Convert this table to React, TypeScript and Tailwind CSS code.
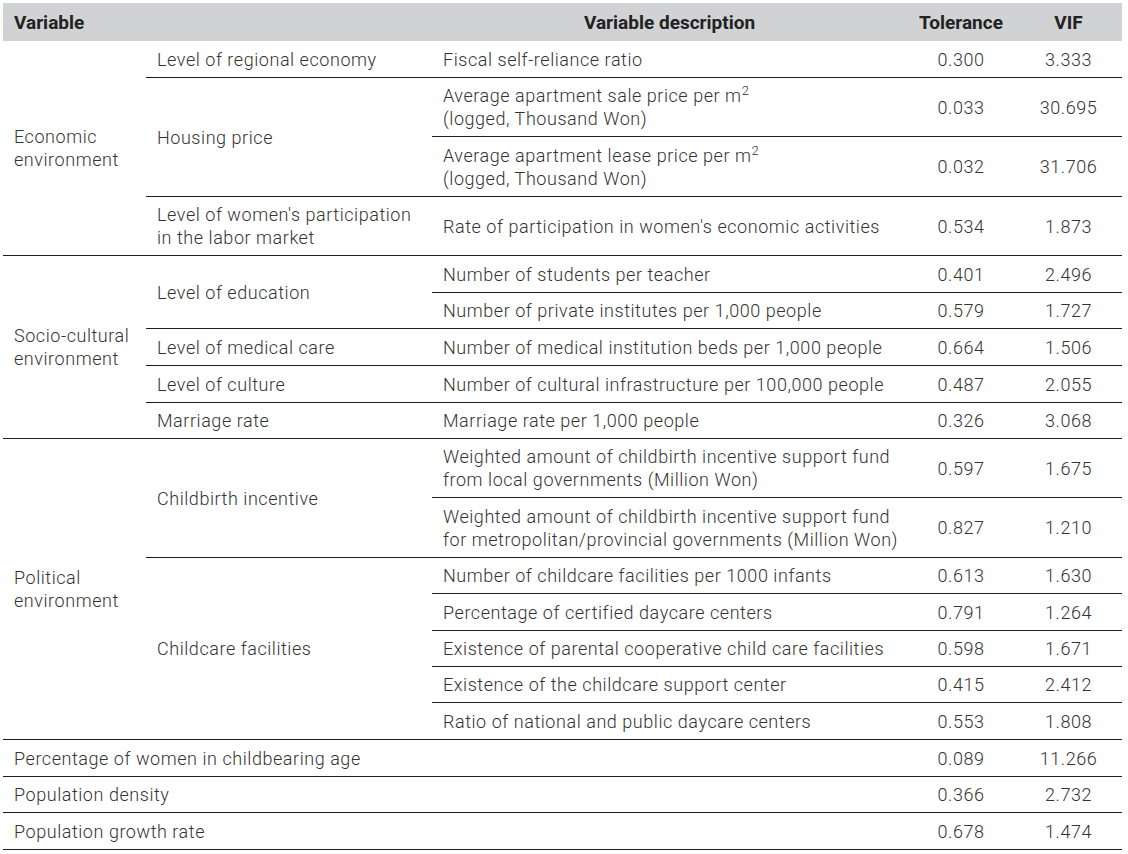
import React from "react";

type CellProps = {
	children?: React.ReactNode;
	className?: string;
	center?: boolean;
};

const Cell = ({ children, className = "", center }: CellProps) => (
	<div
		className={`flex items-center border-b border-[#1f1f1f] ${
			center ? "justify-center text-center" : "pl-[11px]"
		} ${className}`}
	>
		<div>{children}</div>
	</div>
);

const M2 = () => (
	<>
		m<sup className="relative -top-[7px] text-[13px] tracking-normal">2</sup>
	</>
);

const App = () => {
	return (
		<div className="min-h-screen bg-white pt-[3px] pl-[3px]">
			<div
				className="grid w-[1119px] grid-cols-[143px_286px_475px_108px_107px] grid-rows-[38px_37px_59px_60px_59px_37px_36px_37px_37px_36px_59px_60px_36px_37px_36px_36px_37px_37px_36px_37px] text-[18px] leading-[23px] font-light tracking-[0.55px] text-[#333333]"
				style={{ fontFamily: "Roboto, 'Noto Sans', sans-serif" }}
			>
				{/* header */}
				<div className="col-span-2 flex items-center bg-[#d1d2d4] pl-[11px] text-[19px] font-bold tracking-[0px] text-[#222]">
					Variable
				</div>
				<div className="flex items-center justify-center bg-[#d1d2d4] text-[19px] font-bold tracking-[0px] text-[#222]">
					Variable description
				</div>
				<div className="flex items-center justify-center bg-[#d1d2d4] text-[19px] font-bold tracking-[0px] text-[#222]">
					Tolerance
				</div>
				<div className="flex items-center justify-center bg-[#d1d2d4] text-[19px] font-bold tracking-[0px] text-[#222]">
					VIF
				</div>

				{/* economic */}
				<Cell className="row-span-4">
					Economic
					<br />
					environment
				</Cell>
				<Cell>Level of regional economy</Cell>
				<Cell>Fiscal self-reliance ratio</Cell>
				<Cell center>0.300</Cell>
				<Cell center>3.333</Cell>

				<Cell className="row-span-2">Housing price</Cell>
				<Cell>
					Average apartment sale price per <M2 />
					<br />
					(logged, Thousand Won)
				</Cell>
				<Cell center>0.033</Cell>
				<Cell center>30.695</Cell>

				<Cell>
					Average apartment lease price per <M2 />
					<br />
					(logged, Thousand Won)
				</Cell>
				<Cell center>0.032</Cell>
				<Cell center>31.706</Cell>

				<Cell>
					Level of women's participation
					<br />
					in the labor market
				</Cell>
				<Cell>Rate of participation in women's economic activities</Cell>
				<Cell center>0.534</Cell>
				<Cell center>1.873</Cell>

				{/* socio-cultural */}
				<Cell className="row-span-5">
					Socio-cultural
					<br />
					environment
				</Cell>
				<Cell className="row-span-2">Level of education</Cell>
				<Cell>Number of students per teacher</Cell>
				<Cell center>0.401</Cell>
				<Cell center>2.496</Cell>

				<Cell>Number of private institutes per 1,000 people</Cell>
				<Cell center>0.579</Cell>
				<Cell center>1.727</Cell>

				<Cell>Level of medical care</Cell>
				<Cell>Number of medical institution beds per 1,000 people</Cell>
				<Cell center>0.664</Cell>
				<Cell center>1.506</Cell>

				<Cell>Level of culture</Cell>
				<Cell>Number of cultural infrastructure per 100,000 people</Cell>
				<Cell center>0.487</Cell>
				<Cell center>2.055</Cell>

				<Cell>Marriage rate</Cell>
				<Cell>Marriage rate per 1,000 people</Cell>
				<Cell center>0.326</Cell>
				<Cell center>3.068</Cell>

				{/* political */}
				<Cell className="row-span-7">
					Political
					<br />
					environment
				</Cell>
				<Cell className="row-span-2">Childbirth incentive</Cell>
				<Cell>
					Weighted amount of childbirth incentive support fund
					<br />
					from local governments (Million Won)
				</Cell>
				<Cell center>0.597</Cell>
				<Cell center>1.675</Cell>

				<Cell>
					Weighted amount of childbirth incentive support fund
					<br />
					for metropolitan/provincial governments (Million Won)
				</Cell>
				<Cell center>0.827</Cell>
				<Cell center>1.210</Cell>

				<Cell className="row-span-5">Childcare facilities</Cell>
				<Cell>Number of childcare facilities per 1000 infants</Cell>
				<Cell center>0.613</Cell>
				<Cell center>1.630</Cell>

				<Cell>Percentage of certified daycare centers</Cell>
				<Cell center>0.791</Cell>
				<Cell center>1.264</Cell>

				<Cell>Existence of parental cooperative child care facilities</Cell>
				<Cell center>0.598</Cell>
				<Cell center>1.671</Cell>

				<Cell>Existence of the childcare support center</Cell>
				<Cell center>0.415</Cell>
				<Cell center>2.412</Cell>

				<Cell>Ratio of national and public daycare centers</Cell>
				<Cell center>0.553</Cell>
				<Cell center>1.808</Cell>

				{/* single rows */}
				<Cell className="col-span-3">Percentage of women in childbearing age</Cell>
				<Cell center>0.089</Cell>
				<Cell center>11.266</Cell>

				<Cell className="col-span-3">Population density</Cell>
				<Cell center>0.366</Cell>
				<Cell center>2.732</Cell>

				<Cell className="col-span-3">Population growth rate</Cell>
				<Cell center>0.678</Cell>
				<Cell center>1.474</Cell>
			</div>
		</div>
	);
};

export default App;
